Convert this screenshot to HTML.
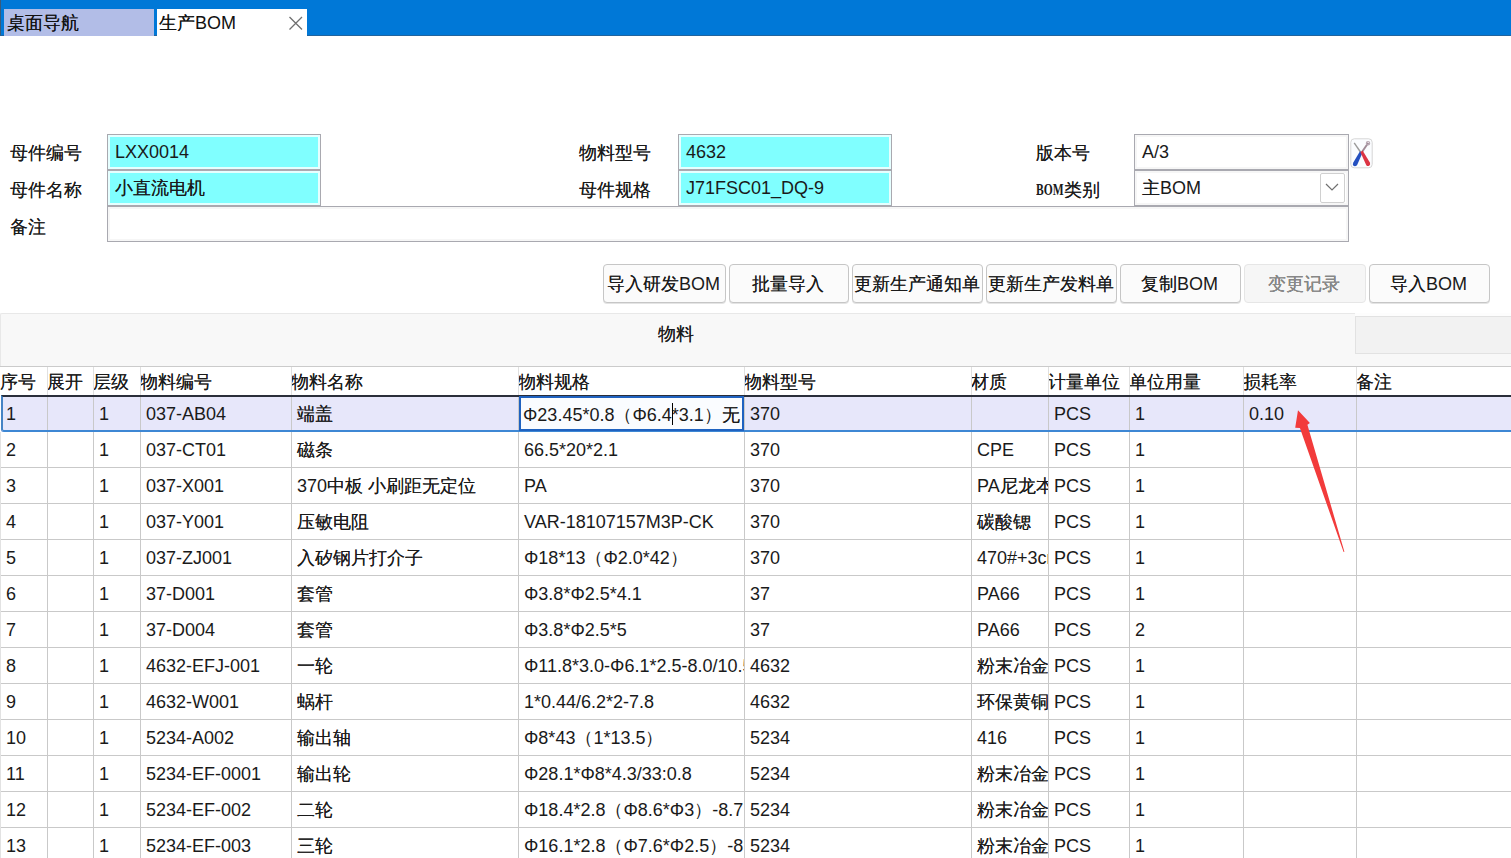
<!DOCTYPE html>
<html><head><meta charset="utf-8"><style>
*{box-sizing:border-box;margin:0;padding:0}
html,body{width:1511px;height:858px;overflow:hidden;background:#fff;font-family:"Liberation Sans",sans-serif;font-size:18px;color:#1a1a1a}
.c{text-shadow:0.4px 0 0 rgba(20,20,20,0.8)}
.abs{position:absolute}
.lbl{position:absolute;white-space:nowrap;line-height:20px}
.inp{position:absolute;border:1px solid #a9a9b0;background:#80ffff;box-shadow:inset 0 0 0 2px #e6ffff;white-space:nowrap;line-height:33px;padding-left:7px;padding-top:1px;overflow:hidden}
.inpw{background:#fff;box-shadow:inset 0 0 0 2px #f6f6f6}
.btn{position:absolute;top:264px;height:39px;border:1px solid #c6c6c6;border-radius:4px;background:#fbfbfb;text-align:center;line-height:37px;padding-top:1px;padding-right:2px;white-space:nowrap;color:#1a1a1a;box-shadow:0 1px 0 #e4e4e4}
.cell{position:absolute;white-space:nowrap;overflow:hidden;line-height:35px;padding-left:6px;padding-top:2px}
.hc{position:absolute;white-space:nowrap;overflow:hidden;line-height:28px;top:368px;height:27px}
</style></head><body>

<div class="abs" style="left:0;top:0;width:1511px;height:36px;background:#0078d7"></div>
<div class="abs" style="left:0;top:0;width:1px;height:36px;background:#3a5a7a"></div>
<div class="abs" style="left:0;top:35px;width:1511px;height:1px;background:#22649e"></div>
<div class="abs" style="left:4px;top:9px;width:150px;height:27px;background:#b2bde7"></div>
<div class="lbl" style="left:7px;top:13px;color:#111"><span class="c">桌面导航</span></div>
<div class="abs" style="left:157px;top:9px;width:150px;height:27px;background:#fff"></div>
<div class="lbl" style="left:159px;top:13px;color:#111"><span class="c">生产</span>BOM</div>
<svg class="abs" style="left:288px;top:16px" width="16" height="15" viewBox="0 0 16 15"><path d="M1.5 1 L14 13.5 M14 1 L1.5 13.5" stroke="#707070" stroke-width="1.3" fill="none"/></svg>
<div class="lbl" style="left:10px;top:143px"><span class="c">母件编号</span></div>
<div class="lbl" style="left:10px;top:180px"><span class="c">母件名称</span></div>
<div class="lbl" style="left:10px;top:217px"><span class="c">备注</span></div>
<div class="inp" style="left:107px;top:134px;width:214px;height:36px">LXX0014</div>
<div class="inp" style="left:107px;top:170px;width:214px;height:36px"><span class="c">小直流电机</span></div>
<div class="inp inpw" style="left:107px;top:206px;width:1242px;height:36px"></div>
<div class="lbl" style="left:579px;top:143px"><span class="c">物料型号</span></div>
<div class="lbl" style="left:579px;top:180px"><span class="c">母件规格</span></div>
<div class="inp" style="left:678px;top:134px;width:214px;height:36px">4632</div>
<div class="inp" style="left:678px;top:170px;width:214px;height:36px">J71FSC01_DQ-9</div>
<div class="lbl" style="left:1036px;top:143px"><span class="c">版本号</span></div>
<div class="lbl" style="left:1036px;top:179px;width:40px;font-family:'Liberation Serif',serif;font-weight:bold;font-size:17px;transform:scaleX(0.68);transform-origin:0 0;line-height:21px">BOM</div>
<div class="lbl" style="left:1064px;top:180px"><span class="c">类别</span></div>
<div class="inp inpw" style="left:1134px;top:134px;width:215px;height:36px">A/3</div>
<div class="inp inpw" style="left:1134px;top:170px;width:215px;height:36px"><span class="c">主</span>BOM</div>
<div class="abs" style="left:1320px;top:173px;width:25px;height:30px;border:1px solid #d0d0d0;border-radius:2px;background:#fff"></div>
<svg class="abs" style="left:1324px;top:182px" width="16" height="10" viewBox="0 0 16 10"><path d="M2 2 L8 8 L14 2" stroke="#707070" stroke-width="1.2" fill="none"/></svg>
<svg class="abs" style="left:1350px;top:138px" width="23" height="31" viewBox="0 0 23 31">
<rect x="0.8" y="0.8" width="21.4" height="29" rx="3.5" fill="#fbfdff" stroke="#d6d6d6" stroke-width="1"/>
<path d="M4.2 4.8 L10.8 14.5" stroke="#9a9a9a" stroke-width="1.4" fill="none"/>
<path d="M18.3 4.8 L12 14" stroke="#a08c98" stroke-width="2" fill="none"/>
<circle cx="18" cy="5.2" r="1.7" fill="none" stroke="#b8a8b4" stroke-width="1.1"/>
<path d="M10 13.2 L12.4 15 L7 27.2 Q5 29.2 3.2 27.6 Q2.4 26.5 3.3 24.6 Z" fill="#2450c0"/>
<path d="M10.4 14.2 L12.6 12.4 L20 24.8 Q20.6 26.8 19.2 27.8 Q17.5 28.6 16.3 27.2 Z" fill="#dc3444"/>
</svg>
<div class="btn" style="left:603px;width:123px"><span class="c">导入研发</span>BOM</div>
<div class="btn" style="left:729px;width:120px"><span class="c">批量导入</span></div>
<div class="btn" style="left:852px;width:131px"><span class="c">更新生产通知单</span></div>
<div class="btn" style="left:986px;width:131px"><span class="c">更新生产发料单</span></div>
<div class="btn" style="left:1120px;width:121px"><span class="c">复制</span>BOM</div>
<div class="btn" style="left:1244px;width:122px;color:#8c8c8c;background:#f6f6f6;border-color:#e6e6e6;box-shadow:none"><span class="c">变更记录</span></div>
<div class="btn" style="left:1369px;width:121px"><span class="c">导入</span>BOM</div>
<div class="abs" style="left:0;top:313px;width:1511px;height:54px;background:#f8f8f8;border-top:1px solid #e8e8e8;border-left:1px solid #e8e8e8;border-top-left-radius:2px"></div>
<div class="abs" style="left:1355px;top:313px;width:156px;height:3px;background:#fdfdfd"></div>
<div class="abs" style="left:1355px;top:316px;width:156px;height:38px;background:#f2f2f2;border:1px solid #e2e2e2;border-right:none"></div>
<div class="lbl" style="left:658px;top:324px"><span class="c">物料</span></div>
<div class="abs" style="left:0;top:366px;width:1511px;height:29px;background:#fff;border-top:1px solid #cbcbcb"></div>
<div class="hc" style="left:0px;width:46px"><span class="c">序号</span></div>
<div class="hc" style="left:47px;width:45px"><span class="c">展开</span></div>
<div class="hc" style="left:93px;width:46px"><span class="c">层级</span></div>
<div class="hc" style="left:140px;width:150px"><span class="c">物料编号</span></div>
<div class="hc" style="left:291px;width:226px"><span class="c">物料名称</span></div>
<div class="hc" style="left:518px;width:225px"><span class="c">物料规格</span></div>
<div class="hc" style="left:744px;width:226px"><span class="c">物料型号</span></div>
<div class="hc" style="left:971px;width:76px"><span class="c">材质</span></div>
<div class="hc" style="left:1048px;width:80px"><span class="c">计量单位</span></div>
<div class="hc" style="left:1129px;width:113px"><span class="c">单位用量</span></div>
<div class="hc" style="left:1243px;width:112px"><span class="c">损耗率</span></div>
<div class="hc" style="left:1356px;width:154px"><span class="c">备注</span></div>
<div class="abs" style="left:1px;top:395px;width:1510px;height:37px;background:#e7e7fa"></div>
<div class="cell" style="left:0px;top:395px;width:47px;height:36px">1</div>
<div class="cell" style="left:93px;top:395px;width:47px;height:36px">1</div>
<div class="cell" style="left:140px;top:395px;width:151px;height:36px">037-AB04</div>
<div class="cell" style="left:291px;top:395px;width:227px;height:36px"><span class="c">端盖</span></div>
<div class="cell" style="left:518px;top:395px;width:226px;height:36px">Φ23.45*0.8（Φ6.4*3.1）<span class="c">无</span></div>
<div class="cell" style="left:744px;top:395px;width:227px;height:36px">370</div>
<div class="cell" style="left:1048px;top:395px;width:81px;height:36px">PCS</div>
<div class="cell" style="left:1129px;top:395px;width:114px;height:36px">1</div>
<div class="cell" style="left:1243px;top:395px;width:113px;height:36px">0.10</div>
<div class="cell" style="left:0px;top:431px;width:47px;height:36px">2</div>
<div class="cell" style="left:93px;top:431px;width:47px;height:36px">1</div>
<div class="cell" style="left:140px;top:431px;width:151px;height:36px">037-CT01</div>
<div class="cell" style="left:291px;top:431px;width:227px;height:36px"><span class="c">磁条</span></div>
<div class="cell" style="left:518px;top:431px;width:226px;height:36px">66.5*20*2.1</div>
<div class="cell" style="left:744px;top:431px;width:227px;height:36px">370</div>
<div class="cell" style="left:971px;top:431px;width:77px;height:36px">CPE</div>
<div class="cell" style="left:1048px;top:431px;width:81px;height:36px">PCS</div>
<div class="cell" style="left:1129px;top:431px;width:114px;height:36px">1</div>
<div class="cell" style="left:0px;top:467px;width:47px;height:36px">3</div>
<div class="cell" style="left:93px;top:467px;width:47px;height:36px">1</div>
<div class="cell" style="left:140px;top:467px;width:151px;height:36px">037-X001</div>
<div class="cell" style="left:291px;top:467px;width:227px;height:36px">370<span class="c">中板</span> <span class="c">小刷距无定位</span></div>
<div class="cell" style="left:518px;top:467px;width:226px;height:36px">PA</div>
<div class="cell" style="left:744px;top:467px;width:227px;height:36px">370</div>
<div class="cell" style="left:971px;top:467px;width:77px;height:36px">PA<span class="c">尼龙本色</span></div>
<div class="cell" style="left:1048px;top:467px;width:81px;height:36px">PCS</div>
<div class="cell" style="left:1129px;top:467px;width:114px;height:36px">1</div>
<div class="cell" style="left:0px;top:503px;width:47px;height:36px">4</div>
<div class="cell" style="left:93px;top:503px;width:47px;height:36px">1</div>
<div class="cell" style="left:140px;top:503px;width:151px;height:36px">037-Y001</div>
<div class="cell" style="left:291px;top:503px;width:227px;height:36px"><span class="c">压敏电阻</span></div>
<div class="cell" style="left:518px;top:503px;width:226px;height:36px">VAR-18107157M3P-CK</div>
<div class="cell" style="left:744px;top:503px;width:227px;height:36px">370</div>
<div class="cell" style="left:971px;top:503px;width:77px;height:36px"><span class="c">碳酸锶</span></div>
<div class="cell" style="left:1048px;top:503px;width:81px;height:36px">PCS</div>
<div class="cell" style="left:1129px;top:503px;width:114px;height:36px">1</div>
<div class="cell" style="left:0px;top:539px;width:47px;height:36px">5</div>
<div class="cell" style="left:93px;top:539px;width:47px;height:36px">1</div>
<div class="cell" style="left:140px;top:539px;width:151px;height:36px">037-ZJ001</div>
<div class="cell" style="left:291px;top:539px;width:227px;height:36px"><span class="c">入矽钢片打介子</span></div>
<div class="cell" style="left:518px;top:539px;width:226px;height:36px">Φ18*13（Φ2.0*42）</div>
<div class="cell" style="left:744px;top:539px;width:227px;height:36px">370</div>
<div class="cell" style="left:971px;top:539px;width:77px;height:36px">470#+3cr</div>
<div class="cell" style="left:1048px;top:539px;width:81px;height:36px">PCS</div>
<div class="cell" style="left:1129px;top:539px;width:114px;height:36px">1</div>
<div class="cell" style="left:0px;top:575px;width:47px;height:36px">6</div>
<div class="cell" style="left:93px;top:575px;width:47px;height:36px">1</div>
<div class="cell" style="left:140px;top:575px;width:151px;height:36px">37-D001</div>
<div class="cell" style="left:291px;top:575px;width:227px;height:36px"><span class="c">套管</span></div>
<div class="cell" style="left:518px;top:575px;width:226px;height:36px">Φ3.8*Φ2.5*4.1</div>
<div class="cell" style="left:744px;top:575px;width:227px;height:36px">37</div>
<div class="cell" style="left:971px;top:575px;width:77px;height:36px">PA66</div>
<div class="cell" style="left:1048px;top:575px;width:81px;height:36px">PCS</div>
<div class="cell" style="left:1129px;top:575px;width:114px;height:36px">1</div>
<div class="cell" style="left:0px;top:611px;width:47px;height:36px">7</div>
<div class="cell" style="left:93px;top:611px;width:47px;height:36px">1</div>
<div class="cell" style="left:140px;top:611px;width:151px;height:36px">37-D004</div>
<div class="cell" style="left:291px;top:611px;width:227px;height:36px"><span class="c">套管</span></div>
<div class="cell" style="left:518px;top:611px;width:226px;height:36px">Φ3.8*Φ2.5*5</div>
<div class="cell" style="left:744px;top:611px;width:227px;height:36px">37</div>
<div class="cell" style="left:971px;top:611px;width:77px;height:36px">PA66</div>
<div class="cell" style="left:1048px;top:611px;width:81px;height:36px">PCS</div>
<div class="cell" style="left:1129px;top:611px;width:114px;height:36px">2</div>
<div class="cell" style="left:0px;top:647px;width:47px;height:36px">8</div>
<div class="cell" style="left:93px;top:647px;width:47px;height:36px">1</div>
<div class="cell" style="left:140px;top:647px;width:151px;height:36px">4632-EFJ-001</div>
<div class="cell" style="left:291px;top:647px;width:227px;height:36px"><span class="c">一轮</span></div>
<div class="cell" style="left:518px;top:647px;width:226px;height:36px">Φ11.8*3.0-Φ6.1*2.5-8.0/10.5</div>
<div class="cell" style="left:744px;top:647px;width:227px;height:36px">4632</div>
<div class="cell" style="left:971px;top:647px;width:77px;height:36px"><span class="c">粉末冶金</span></div>
<div class="cell" style="left:1048px;top:647px;width:81px;height:36px">PCS</div>
<div class="cell" style="left:1129px;top:647px;width:114px;height:36px">1</div>
<div class="cell" style="left:0px;top:683px;width:47px;height:36px">9</div>
<div class="cell" style="left:93px;top:683px;width:47px;height:36px">1</div>
<div class="cell" style="left:140px;top:683px;width:151px;height:36px">4632-W001</div>
<div class="cell" style="left:291px;top:683px;width:227px;height:36px"><span class="c">蜗杆</span></div>
<div class="cell" style="left:518px;top:683px;width:226px;height:36px">1*0.44/6.2*2-7.8</div>
<div class="cell" style="left:744px;top:683px;width:227px;height:36px">4632</div>
<div class="cell" style="left:971px;top:683px;width:77px;height:36px"><span class="c">环保黄铜</span></div>
<div class="cell" style="left:1048px;top:683px;width:81px;height:36px">PCS</div>
<div class="cell" style="left:1129px;top:683px;width:114px;height:36px">1</div>
<div class="cell" style="left:0px;top:719px;width:47px;height:36px">10</div>
<div class="cell" style="left:93px;top:719px;width:47px;height:36px">1</div>
<div class="cell" style="left:140px;top:719px;width:151px;height:36px">5234-A002</div>
<div class="cell" style="left:291px;top:719px;width:227px;height:36px"><span class="c">输出轴</span></div>
<div class="cell" style="left:518px;top:719px;width:226px;height:36px">Φ8*43（1*13.5）</div>
<div class="cell" style="left:744px;top:719px;width:227px;height:36px">5234</div>
<div class="cell" style="left:971px;top:719px;width:77px;height:36px">416</div>
<div class="cell" style="left:1048px;top:719px;width:81px;height:36px">PCS</div>
<div class="cell" style="left:1129px;top:719px;width:114px;height:36px">1</div>
<div class="cell" style="left:0px;top:755px;width:47px;height:36px">11</div>
<div class="cell" style="left:93px;top:755px;width:47px;height:36px">1</div>
<div class="cell" style="left:140px;top:755px;width:151px;height:36px">5234-EF-0001</div>
<div class="cell" style="left:291px;top:755px;width:227px;height:36px"><span class="c">输出轮</span></div>
<div class="cell" style="left:518px;top:755px;width:226px;height:36px">Φ28.1*Φ8*4.3/33:0.8</div>
<div class="cell" style="left:744px;top:755px;width:227px;height:36px">5234</div>
<div class="cell" style="left:971px;top:755px;width:77px;height:36px"><span class="c">粉末冶金</span></div>
<div class="cell" style="left:1048px;top:755px;width:81px;height:36px">PCS</div>
<div class="cell" style="left:1129px;top:755px;width:114px;height:36px">1</div>
<div class="cell" style="left:0px;top:791px;width:47px;height:36px">12</div>
<div class="cell" style="left:93px;top:791px;width:47px;height:36px">1</div>
<div class="cell" style="left:140px;top:791px;width:151px;height:36px">5234-EF-002</div>
<div class="cell" style="left:291px;top:791px;width:227px;height:36px"><span class="c">二轮</span></div>
<div class="cell" style="left:518px;top:791px;width:226px;height:36px">Φ18.4*2.8（Φ8.6*Φ3）-8.7</div>
<div class="cell" style="left:744px;top:791px;width:227px;height:36px">5234</div>
<div class="cell" style="left:971px;top:791px;width:77px;height:36px"><span class="c">粉末冶金</span></div>
<div class="cell" style="left:1048px;top:791px;width:81px;height:36px">PCS</div>
<div class="cell" style="left:1129px;top:791px;width:114px;height:36px">1</div>
<div class="cell" style="left:0px;top:827px;width:47px;height:36px">13</div>
<div class="cell" style="left:93px;top:827px;width:47px;height:36px">1</div>
<div class="cell" style="left:140px;top:827px;width:151px;height:36px">5234-EF-003</div>
<div class="cell" style="left:291px;top:827px;width:227px;height:36px"><span class="c">三轮</span></div>
<div class="cell" style="left:518px;top:827px;width:226px;height:36px">Φ16.1*2.8（Φ7.6*Φ2.5）-8.5</div>
<div class="cell" style="left:744px;top:827px;width:227px;height:36px">5234</div>
<div class="cell" style="left:971px;top:827px;width:77px;height:36px"><span class="c">粉末冶金</span></div>
<div class="cell" style="left:1048px;top:827px;width:81px;height:36px">PCS</div>
<div class="cell" style="left:1129px;top:827px;width:114px;height:36px">1</div>
<div class="abs" style="left:0;top:467px;width:1511px;height:1px;background:#c9c9c9"></div>
<div class="abs" style="left:0;top:503px;width:1511px;height:1px;background:#c9c9c9"></div>
<div class="abs" style="left:0;top:539px;width:1511px;height:1px;background:#c9c9c9"></div>
<div class="abs" style="left:0;top:575px;width:1511px;height:1px;background:#c9c9c9"></div>
<div class="abs" style="left:0;top:611px;width:1511px;height:1px;background:#c9c9c9"></div>
<div class="abs" style="left:0;top:647px;width:1511px;height:1px;background:#c9c9c9"></div>
<div class="abs" style="left:0;top:683px;width:1511px;height:1px;background:#c9c9c9"></div>
<div class="abs" style="left:0;top:719px;width:1511px;height:1px;background:#c9c9c9"></div>
<div class="abs" style="left:0;top:755px;width:1511px;height:1px;background:#c9c9c9"></div>
<div class="abs" style="left:0;top:791px;width:1511px;height:1px;background:#c9c9c9"></div>
<div class="abs" style="left:0;top:827px;width:1511px;height:1px;background:#c9c9c9"></div>
<div class="abs" style="left:0;top:863px;width:1511px;height:1px;background:#c9c9c9"></div>
<div class="abs" style="left:47px;top:367px;width:1px;height:28px;background:#e0e0e0"></div>
<div class="abs" style="left:47px;top:395px;width:1px;height:463px;background:#c9c9c9"></div>
<div class="abs" style="left:93px;top:367px;width:1px;height:28px;background:#e0e0e0"></div>
<div class="abs" style="left:93px;top:395px;width:1px;height:463px;background:#c9c9c9"></div>
<div class="abs" style="left:140px;top:367px;width:1px;height:28px;background:#e0e0e0"></div>
<div class="abs" style="left:140px;top:395px;width:1px;height:463px;background:#c9c9c9"></div>
<div class="abs" style="left:291px;top:367px;width:1px;height:28px;background:#e0e0e0"></div>
<div class="abs" style="left:291px;top:395px;width:1px;height:463px;background:#c9c9c9"></div>
<div class="abs" style="left:518px;top:367px;width:1px;height:28px;background:#e0e0e0"></div>
<div class="abs" style="left:518px;top:395px;width:1px;height:463px;background:#c9c9c9"></div>
<div class="abs" style="left:744px;top:367px;width:1px;height:28px;background:#e0e0e0"></div>
<div class="abs" style="left:744px;top:395px;width:1px;height:463px;background:#c9c9c9"></div>
<div class="abs" style="left:971px;top:367px;width:1px;height:28px;background:#e0e0e0"></div>
<div class="abs" style="left:971px;top:395px;width:1px;height:463px;background:#c9c9c9"></div>
<div class="abs" style="left:1048px;top:367px;width:1px;height:28px;background:#e0e0e0"></div>
<div class="abs" style="left:1048px;top:395px;width:1px;height:463px;background:#c9c9c9"></div>
<div class="abs" style="left:1129px;top:367px;width:1px;height:28px;background:#e0e0e0"></div>
<div class="abs" style="left:1129px;top:395px;width:1px;height:463px;background:#c9c9c9"></div>
<div class="abs" style="left:1243px;top:367px;width:1px;height:28px;background:#e0e0e0"></div>
<div class="abs" style="left:1243px;top:395px;width:1px;height:463px;background:#c9c9c9"></div>
<div class="abs" style="left:1356px;top:367px;width:1px;height:28px;background:#e0e0e0"></div>
<div class="abs" style="left:1356px;top:395px;width:1px;height:463px;background:#c9c9c9"></div>
<div class="abs" style="left:1px;top:395px;width:1510px;height:37px;border-top:2px solid #2a2e3a;border-left:2px solid #4583c4;border-bottom:2px solid #3d87d4;border-bottom-left-radius:3px"></div>
<div class="abs" style="left:519px;top:396px;width:225px;height:35px;border:2px solid #1f62c0;background:#fafcff"></div>
<div class="cell" style="left:519px;top:396px;width:223px;height:35px;padding-left:4px;line-height:34px">Φ23.45*0.8（Φ6.4*3.1）<span class="c">无</span></div>
<div class="abs" style="left:672px;top:403px;width:1px;height:22px;background:#000"></div>
<div class="abs" style="left:0;top:432px;width:1px;height:426px;background:#e2e2e2"></div>
<svg class="abs" style="left:0;top:0" width="1511" height="858" viewBox="0 0 1511 858">
<path d="M1298 410.3 L1309.9 423 L1307.4 424.7 L1344.4 551.8 L1343.6 552 L1299.9 428 L1295.2 427.8 Z" fill="#f23b3b"/>
</svg>
</body></html>
